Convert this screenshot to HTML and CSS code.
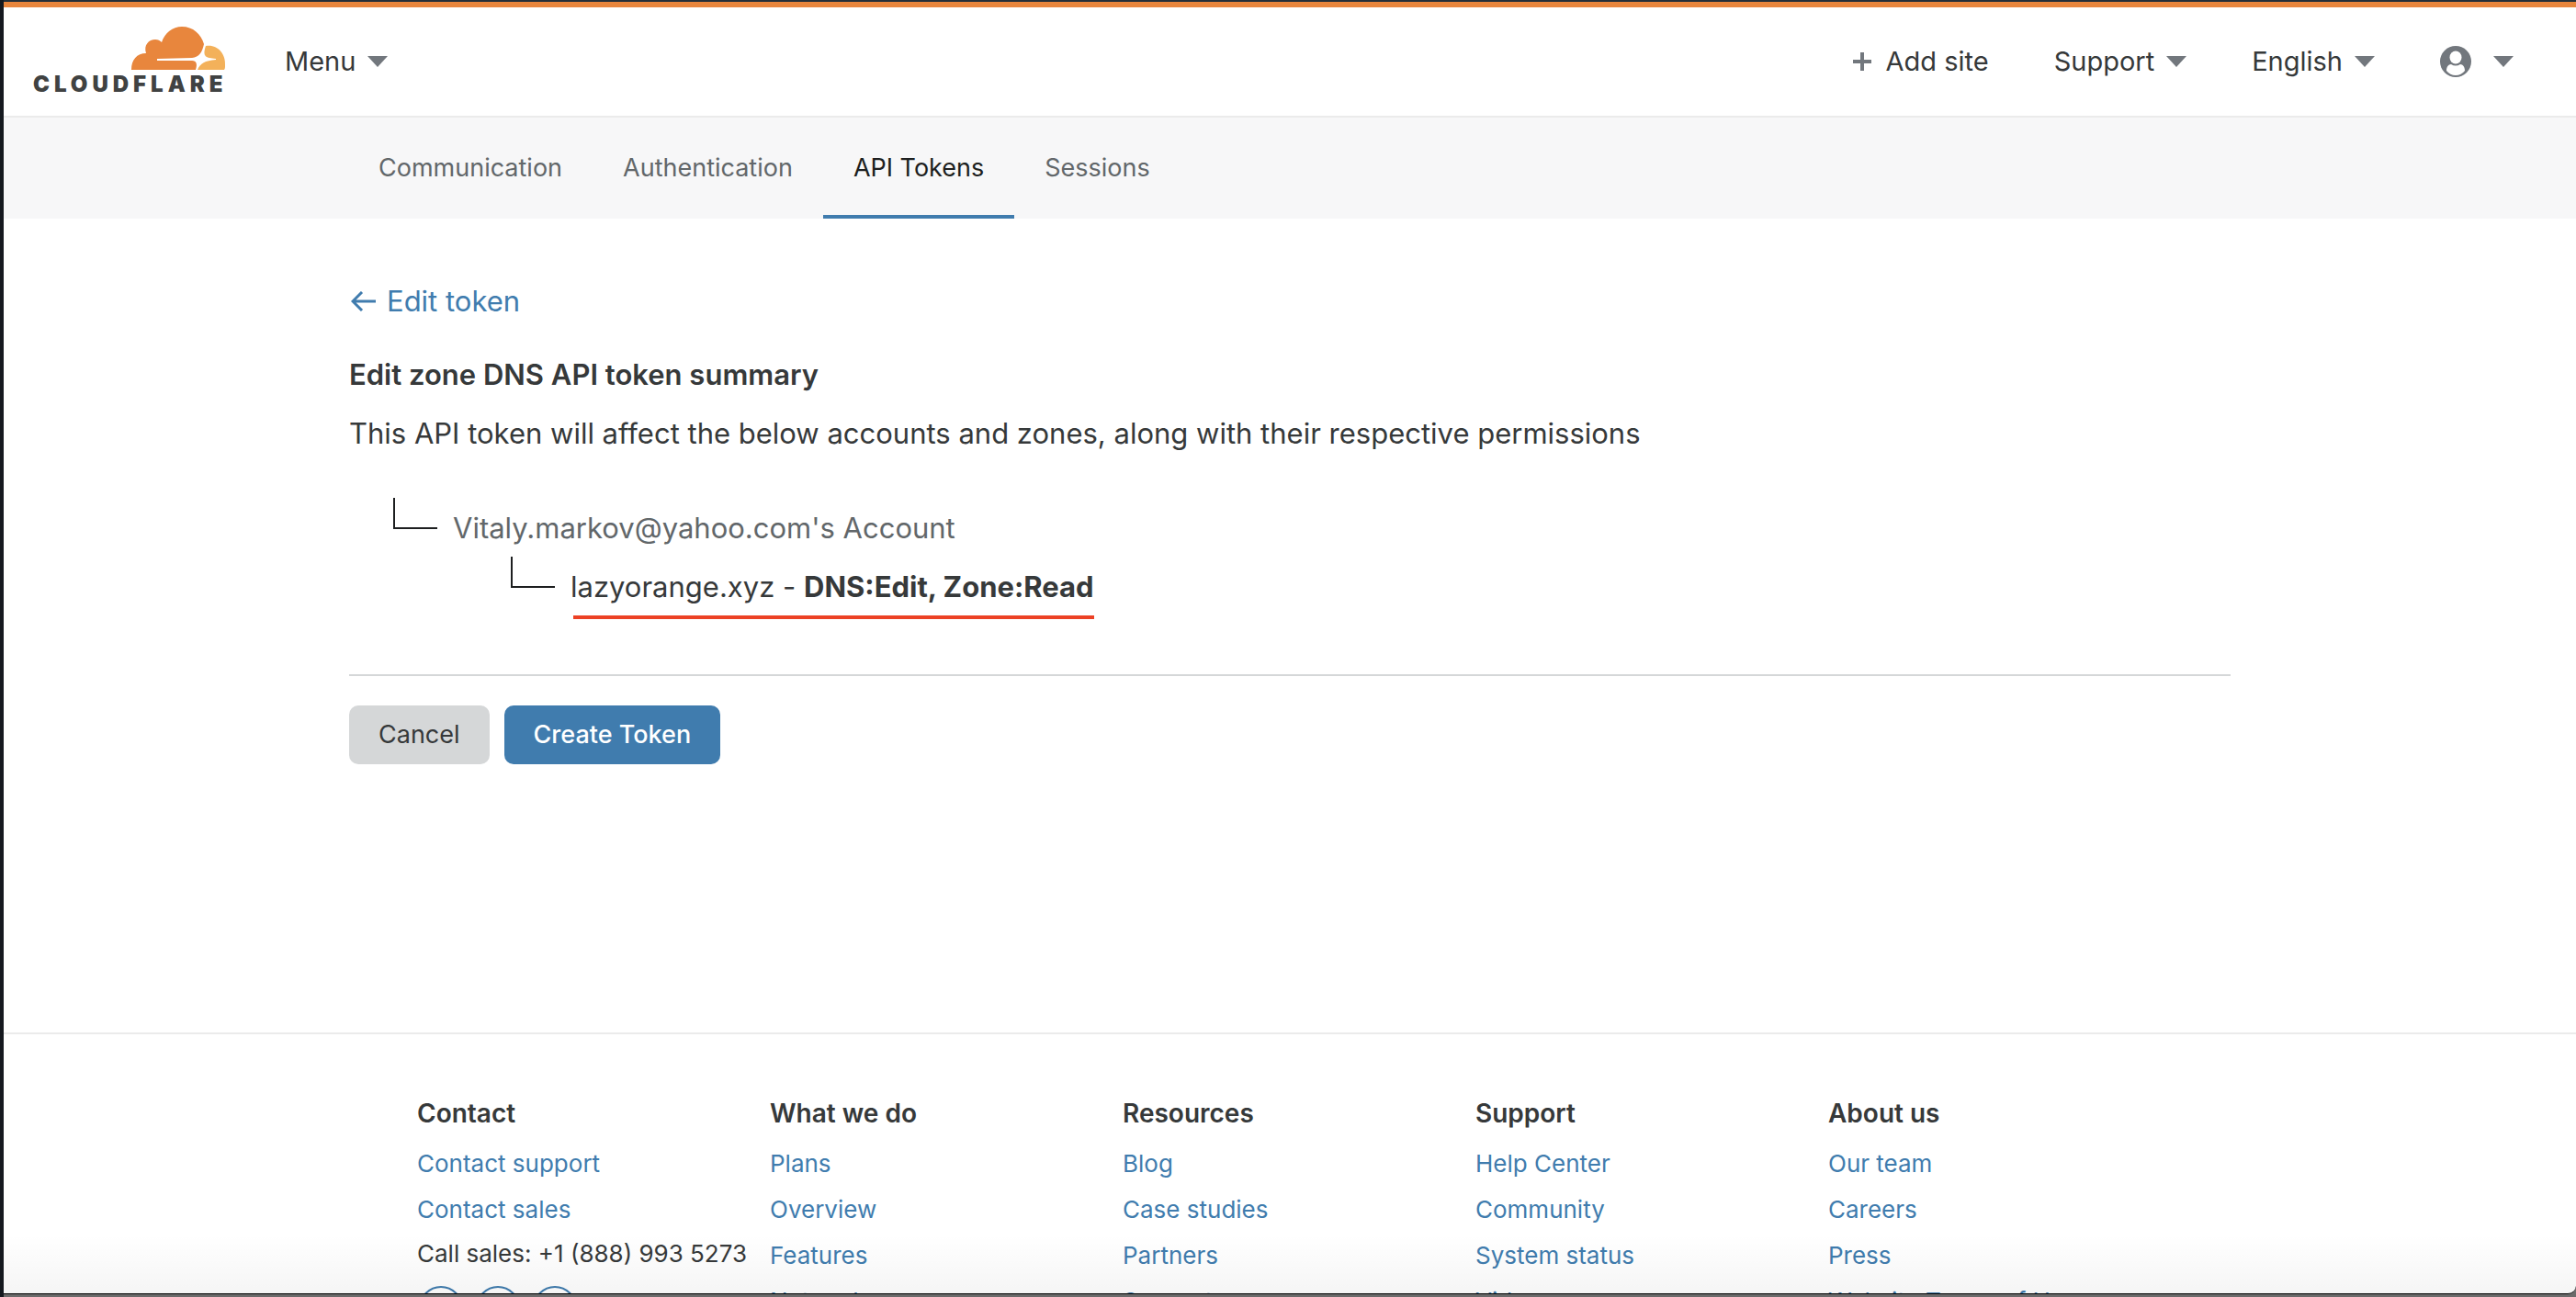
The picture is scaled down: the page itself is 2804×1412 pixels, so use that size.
FILE: index.html
```html
<!DOCTYPE html>
<html lang="en">
<head>
<meta charset="utf-8">
<title>API Tokens | Cloudflare</title>
<link rel="stylesheet" href="styles.css">
</head>
<body>
<div class="window">
  <header class="topbar">
    <a class="logo" href="#" aria-label="Cloudflare home">
      <svg class="cloud" viewBox="0 0 103 48" aria-hidden="true">
        <path fill="#e8863d" d="M0 47C0 36 6 29 16 29C13 20 19 14 26 14C29 14 31 15 33 17C36 7 45 0 55 0C67 0 76 8 79 19C77 28 74 33 66 34L28 35V37L66 37C71 37 72 41 70 47Z"/>
        <path fill="#f3b15a" d="M81 21C94 19 103 30 102 42C102 44 102 46 101 47H72C75 40 80 37 92 36V35C81 34 77 33 81 21Z"/>
      </svg>
      <span class="wordmark">CLOUDFLARE</span>
    </a>
    <button class="menu-button" type="button">Menu <svg class="caret" viewBox="0 0 22 12" aria-hidden="true"><path d="M0 0H22L11 12Z"/></svg></button>
    <nav class="utility">
      <button class="menu-button add" type="button"><svg class="plus" viewBox="0 0 20 20" aria-hidden="true"><path d="M8 0H12V8H20V12H12V20H8V12H0V8H8Z"/></svg>Add site</button>
      <button class="menu-button" type="button">Support <svg class="caret" viewBox="0 0 22 12" aria-hidden="true"><path d="M0 0H22L11 12Z"/></svg></button>
      <button class="menu-button" type="button">English <svg class="caret" viewBox="0 0 22 12" aria-hidden="true"><path d="M0 0H22L11 12Z"/></svg></button>
      <button class="menu-button account" type="button" aria-label="Account"><svg class="avatar" viewBox="0 0 34 34" aria-hidden="true"><circle class="disc" cx="17" cy="17" r="17"/><ellipse class="person" cx="17" cy="12.500" rx="6.500" ry="7"/><path class="person" d="M7 27C7 23 9 20 12 20Q17 23 22 20C25 20 27 23 27 27Q23 32 17 32Q11 32 7 27Z"/></svg><svg class="caret" viewBox="0 0 22 12" aria-hidden="true"><path d="M0 0H22L11 12Z"/></svg></button>
    </nav>
  </header>
  <nav class="tabs">
    <a class="tab" href="#">Communication</a>
    <a class="tab" href="#">Authentication</a>
    <a class="tab current" href="#" aria-current="page">API Tokens</a>
    <a class="tab" href="#">Sessions</a>
  </nav>
  <main class="content">
    <a class="back" href="#"><svg class="arrow" viewBox="0 0 28 22" aria-hidden="true"><path d="M12 1L2 11L12 21M2 11H27"/></svg>Edit token</a>
    <h1 class="title">Edit zone DNS API token summary</h1>
    <p class="lead">This API token will affect the below accounts and zones, along with their respective permissions</p>
    <ul class="tree">
      <li>
        <div class="node account-name"><span class="branch"></span>Vitaly.markov@yahoo.com's Account</div>
        <ul class="tree nested">
          <li class="node"><span class="branch"></span><span class="marked">lazyorange.xyz - <strong>DNS:Edit, Zone:Read</strong></span></li>
        </ul>
      </li>
    </ul>
    <div class="actions">
      <button class="button" type="button">Cancel</button>
      <button class="button primary" type="button">Create Token</button>
    </div>
  </main>
  <footer class="footer">
    <section class="column">
      <h2>Contact</h2>
      <ul>
        <li><a href="#">Contact support</a></li>
        <li><a href="#">Contact sales</a></li>
        <li class="phone">Call sales: +1 (888) 993 5273</li>
      </ul>
      <div class="social"><a href="#" aria-label="Facebook"></a><a href="#" aria-label="Twitter"></a><a href="#" aria-label="LinkedIn"></a></div>
    </section>
    <section class="column">
      <h2>What we do</h2>
      <ul>
        <li><a href="#">Plans</a></li>
        <li><a href="#">Overview</a></li>
        <li><a href="#">Features</a></li>
        <li><a href="#">Network</a></li>
      </ul>
    </section>
    <section class="column">
      <h2>Resources</h2>
      <ul>
        <li><a href="#">Blog</a></li>
        <li><a href="#">Case studies</a></li>
        <li><a href="#">Partners</a></li>
        <li><a href="#">Support</a></li>
      </ul>
    </section>
    <section class="column">
      <h2>Support</h2>
      <ul>
        <li><a href="#">Help Center</a></li>
        <li><a href="#">Community</a></li>
        <li><a href="#">System status</a></li>
        <li><a href="#">Videos</a></li>
      </ul>
    </section>
    <section class="column">
      <h2>About us</h2>
      <ul>
        <li><a href="#">Our team</a></li>
        <li><a href="#">Careers</a></li>
        <li><a href="#">Press</a></li>
        <li><a href="#">Website Terms of Use</a></li>
      </ul>
    </section>
  </footer>
</div>
</body>
</html>
```
FILE: styles.css
```css
* { box-sizing: border-box; }
body {
  margin: 0;
  height: 100vh;
  overflow: hidden;
  display: flex;
  padding: 2px 0 3px 4px;
  background: linear-gradient(#15191f, #15191f) left / 4px 100% no-repeat, linear-gradient(#24303a 50%, #6b6b6b 50%);
  color: #36393a;
  font-family: Inter, "Liberation Sans", sans-serif;
}
ul { margin: 0; padding: 0; list-style: none; }
a { color: #407cae; text-decoration: none; }
button { font: inherit; color: inherit; border: 0; cursor: pointer; }
.window {
  flex: 1;
  min-width: 0;
  overflow: hidden;
  position: relative;
  background: #fff;
  border-top: 6px solid #e8863d;
  border-bottom: 1px solid #000;
  border-bottom-right-radius: 9px;
}
/* soft shade along the lower edge of the window */
.window::after {
  content: "";
  position: absolute;
  inset: auto 0 0;
  height: 64px;
  background: linear-gradient(transparent, rgba(0, 0, 0, 0.04));
  pointer-events: none;
}
.topbar {
  display: flex;
  align-items: center;
  height: 120px;
  padding: 0 68px 0 32px;
  border-bottom: 2px solid #ebebeb;
}
.logo { display: flex; flex-direction: column; align-items: flex-end; gap: 2px; width: 210px; }
.cloud { width: 103px; height: 48px; }
.wordmark {
  align-self: flex-start;
  color: #404242;
  font-weight: 900;
  font-size: 24px;
  line-height: 26px;
  letter-spacing: 5px;
}
.menu-button {
  display: flex;
  align-items: center;
  gap: 13px;
  padding: 0;
  background: none;
  font-size: 29px;
  line-height: 44px;
}
.logo + .menu-button { margin-left: 64px; }
.caret { width: 22px; height: 12px; fill: #72777d; }
.plus { width: 20px; height: 20px; fill: #72777d; }
.utility { display: flex; gap: 71px; margin-left: auto; }
.add { gap: 16px; }
.account { gap: 24px; }
.avatar { width: 34px; height: 34px; fill: #72777d; }
.person { fill: #fff; }
.tabs { display: flex; height: 110px; padding-left: 375px; background: #f7f7f8; }
.tab {
  padding: 33px 33px 0;
  font-size: 27px;
  line-height: 44px;
  color: #62676a;
  border-bottom: 4px solid transparent;
}
.tab.current { color: #1d1f20; border-color: #407cae; }
.content { margin: 0 376px; padding: 68px 0 292px; font-size: 31px; line-height: 44px; }
.back { display: inline-flex; align-items: center; gap: 11px; padding-left: 2px; }
.arrow { width: 28px; height: 22px; fill: none; stroke: #407cae; stroke-width: 3; }
.title { margin: 36px 0 20px; font-size: 31px; line-height: 44px; font-weight: 600; }
.lead { margin: 0 0 48px; }
.tree { padding-left: 48px; }
.nested { padding-left: 128px; }
.node { display: flex; align-items: flex-start; gap: 17px; height: 64px; line-height: 66px; }
.account-name { color: #62676a; }
.branch { width: 48px; height: 34px; border: solid #1d1f20; border-width: 0 0 2px 2px; }
.marked { height: 68px; background: linear-gradient(#ec4125, #ec4125) 3px 100% / 100% 4px no-repeat; }
.actions { display: flex; gap: 16px; margin-top: 64px; padding-top: 32px; border-top: 2px solid #d5d7d8; }
.button { padding: 0 32px; border-radius: 10px; background: #d5d7d8; font-size: 27px; line-height: 64px; }
.primary { background: #407cae; color: #fff; font-weight: 500; }
.footer {
  display: grid;
  grid-template-columns: repeat(5, 384px);
  padding: 64px 450px 0;
  border-top: 2px solid #ebebeb;
  font-size: 26px;
}
.column h2 { margin: 0 0 8px; font-size: 28px; line-height: 44px; font-weight: 600; }
.column li { line-height: 50px; white-space: nowrap; }
.column .phone { line-height: 46px; }
.social { display: flex; gap: 14px; padding: 12px 0 0 2px; }
.social a { width: 48px; height: 48px; border: 2px solid #407cae; border-radius: 50%; }
```
